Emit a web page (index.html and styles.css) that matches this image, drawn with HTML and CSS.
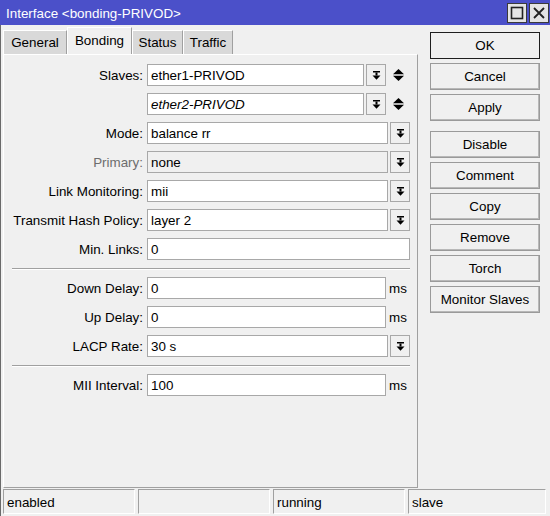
FILE: index.html
```html
<!DOCTYPE html>
<html>
<head>
<meta charset="utf-8">
<link rel="stylesheet" href="styles.css">
</head>
<body>
<div class="window">
  <div class="titlebar">
    <span class="title">Interface &lt;bonding-PRIVOD&gt;</span>
    <div class="tb-btns">
      <span class="tb-btn"><svg width="14" height="14" viewBox="0 0 14 14"><rect x="1.5" y="1.5" width="11" height="11" fill="none" stroke="#222" stroke-width="1.6"/></svg></span>
      <span class="tb-btn"><svg width="14" height="14" viewBox="0 0 14 14"><path d="M2 2 L12 12 M12 2 L2 12" stroke="#222" stroke-width="1.8" fill="none"/></svg></span>
    </div>
  </div>
  <div class="body-area">
    <div class="main">
      <div class="left">
        <div class="tabs">
          <div class="tab t-general">General</div>
          <div class="tab t-bonding active">Bonding</div>
          <div class="tab t-status">Status</div>
          <div class="tab t-traffic">Traffic</div>
        </div>
        <div class="panel">
          <div class="row">
            <div class="label">Slaves:</div>
            <div class="ctrl">
              <div class="field">ether1-PRIVOD</div>
              <div class="dd"><svg width="9" height="9" viewBox="0 0 9 9"><rect x="1" y="0" width="7" height="1.5" fill="#000"/><rect x="3.5" y="1.5" width="2" height="3" fill="#000"/><polygon points="0.5,4.5 8.5,4.5 4.5,8.8" fill="#000"/></svg></div>
              <div class="updown"><svg width="11" height="12" viewBox="0 0 11 12"><polygon points="5.5,0 11,5.3 0,5.3" fill="#000"/><polygon points="0,6.7 11,6.7 5.5,12" fill="#000"/></svg></div>
            </div>
          </div>
          <div class="row">
            <div class="label"></div>
            <div class="ctrl">
              <div class="field italic">ether2-PRIVOD</div>
              <div class="dd"><svg width="9" height="9" viewBox="0 0 9 9"><rect x="1" y="0" width="7" height="1.5" fill="#000"/><rect x="3.5" y="1.5" width="2" height="3" fill="#000"/><polygon points="0.5,4.5 8.5,4.5 4.5,8.8" fill="#000"/></svg></div>
              <div class="updown"><svg width="11" height="12" viewBox="0 0 11 12"><polygon points="5.5,0 11,5.3 0,5.3" fill="#000"/><polygon points="0,6.7 11,6.7 5.5,12" fill="#000"/></svg></div>
            </div>
          </div>
          <div class="row">
            <div class="label">Mode:</div>
            <div class="ctrl">
              <div class="field">balance rr</div>
              <div class="dd"><svg width="9" height="9" viewBox="0 0 9 9"><rect x="1" y="0" width="7" height="1.5" fill="#000"/><rect x="3.5" y="1.5" width="2" height="3" fill="#000"/><polygon points="0.5,4.5 8.5,4.5 4.5,8.8" fill="#000"/></svg></div>
            </div>
          </div>
          <div class="row">
            <div class="label disabled">Primary:</div>
            <div class="ctrl">
              <div class="field off">none</div>
              <div class="dd"><svg width="9" height="9" viewBox="0 0 9 9"><rect x="1" y="0" width="7" height="1.5" fill="#000"/><rect x="3.5" y="1.5" width="2" height="3" fill="#000"/><polygon points="0.5,4.5 8.5,4.5 4.5,8.8" fill="#000"/></svg></div>
            </div>
          </div>
          <div class="row">
            <div class="label">Link Monitoring:</div>
            <div class="ctrl">
              <div class="field">mii</div>
              <div class="dd"><svg width="9" height="9" viewBox="0 0 9 9"><rect x="1" y="0" width="7" height="1.5" fill="#000"/><rect x="3.5" y="1.5" width="2" height="3" fill="#000"/><polygon points="0.5,4.5 8.5,4.5 4.5,8.8" fill="#000"/></svg></div>
            </div>
          </div>
          <div class="row">
            <div class="label">Transmit Hash Policy:</div>
            <div class="ctrl">
              <div class="field">layer 2</div>
              <div class="dd"><svg width="9" height="9" viewBox="0 0 9 9"><rect x="1" y="0" width="7" height="1.5" fill="#000"/><rect x="3.5" y="1.5" width="2" height="3" fill="#000"/><polygon points="0.5,4.5 8.5,4.5 4.5,8.8" fill="#000"/></svg></div>
            </div>
          </div>
          <div class="row">
            <div class="label">Min. Links:</div>
            <div class="ctrl">
              <div class="field">0</div>
            </div>
          </div>
          <div class="sep"></div>
          <div class="row">
            <div class="label">Down Delay:</div>
            <div class="ctrl">
              <div class="field">0</div>
              <div class="unit">ms</div>
            </div>
          </div>
          <div class="row">
            <div class="label">Up Delay:</div>
            <div class="ctrl">
              <div class="field">0</div>
              <div class="unit">ms</div>
            </div>
          </div>
          <div class="row">
            <div class="label">LACP Rate:</div>
            <div class="ctrl">
              <div class="field">30 s</div>
              <div class="dd"><svg width="9" height="9" viewBox="0 0 9 9"><rect x="1" y="0" width="7" height="1.5" fill="#000"/><rect x="3.5" y="1.5" width="2" height="3" fill="#000"/><polygon points="0.5,4.5 8.5,4.5 4.5,8.8" fill="#000"/></svg></div>
            </div>
          </div>
          <div class="sep"></div>
          <div class="row">
            <div class="label">MII Interval:</div>
            <div class="ctrl">
              <div class="field">100</div>
              <div class="unit">ms</div>
            </div>
          </div>
        </div>
      </div>
      <div class="buttons">
        <div class="btn default">OK</div>
        <div class="btn">Cancel</div>
        <div class="btn group-end">Apply</div>
        <div class="btn">Disable</div>
        <div class="btn">Comment</div>
        <div class="btn">Copy</div>
        <div class="btn">Remove</div>
        <div class="btn">Torch</div>
        <div class="btn">Monitor Slaves</div>
      </div>
    </div>
    <div class="statusbar">
      <div class="cell">enabled</div>
      <div class="cell"></div>
      <div class="cell">running</div>
      <div class="cell last">slave</div>
    </div>
  </div>
</div>
</body>
</html>
```

FILE: styles.css
```css
html, body {
  margin: 0;
  padding: 0;
}
body {
  width: 550px;
  height: 516px;
  overflow: hidden;
  background: #f0f0f0;
  font-family: "Liberation Sans", Arial, sans-serif;
  font-size: 13.4px;
  color: #000;
}
.window {
  width: 550px;
  height: 516px;
  display: flex;
  flex-direction: column;
}
.titlebar {
  height: 25px;
  flex: none;
  background: #4b50c9;
  color: #fff;
  display: flex;
  align-items: center;
  justify-content: space-between;
  padding-left: 6px;
  box-sizing: border-box;
}
.title {
  padding-top: 1px;
}
.tb-btns {
  display: flex;
  gap: 2px;
  margin-right: 1px;
}
.tb-btn {
  width: 20px;
  height: 20px;
  box-sizing: border-box;
  border: 1px solid #3a3a3a;
  background: #e4e4e4;
  display: flex;
  align-items: center;
  justify-content: center;
}
.body-area {
  flex: 1;
  display: flex;
  flex-direction: column;
  border-left: 1px solid #6a6a6a;
}
.main {
  height: 464px;
  display: flex;
}
.left {
  margin-left: 2px;
  width: 415px;
  display: flex;
  flex-direction: column;
}
.tabs {
  height: 29px;
  display: flex;
  align-items: flex-end;
}
.tab {
  height: 24px;
  box-sizing: border-box;
  background: #d9d9d9;
  border-top: 1px solid #fff;
  border-left: 1px solid #fff;
  border-right: 1px solid #a0a0a0;
  display: flex;
  align-items: center;
  justify-content: center;
}
.tab.active {
  height: 27px;
  background: #f0f0f0;
  padding-bottom: 2px;
}
.t-general { width: 64px; }
.t-bonding { width: 65px; }
.t-status { width: 51px; }
.t-traffic { width: 50px; }
.panel {
  height: 434px;
  box-sizing: border-box;
  border: 1px solid;
  border-color: #fff #a0a0a0 #a0a0a0 #fff;
  padding: 9px 7px 0 8px;
  display: flex;
  flex-direction: column;
  gap: 7px;
}
.row {
  height: 22px;
  display: flex;
  align-items: center;
}
.label {
  width: 131px;
  margin-right: 4px;
  flex: none;
  text-align: right;
  white-space: nowrap;
}
.label.disabled {
  color: #6d6d6d;
}
.ctrl {
  flex: 1;
  display: flex;
  height: 22px;
}
.field {
  flex: 1;
  height: 22px;
  box-sizing: border-box;
  border: 1px solid #a8a8a8;
  background: #fff;
  padding-left: 3px;
  display: flex;
  align-items: center;
  white-space: nowrap;
}
.field.italic {
  font-style: italic;
}
.field.off {
  background: #f0f0f0;
}
.dd {
  width: 20px;
  height: 22px;
  margin-left: 2px;
  box-sizing: border-box;
  border: 1px solid #a8a8a8;
  background: #f0f0f0;
  display: flex;
  align-items: center;
  justify-content: center;
  flex: none;
}
.updown {
  width: 24px;
  flex: none;
  display: flex;
  align-items: center;
  justify-content: center;
}
.unit {
  width: 24px;
  flex: none;
  padding-left: 3px;
  box-sizing: border-box;
  display: flex;
  align-items: center;
}
.sep {
  height: 1px;
  background: #a0a0a0;
  border-bottom: 1px solid #fff;
  margin-top: 1px;
}
.buttons {
  margin-left: 12px;
  width: 110px;
  padding-top: 7px;
  display: flex;
  flex-direction: column;
  gap: 4px;
}
.btn {
  height: 27px;
  box-sizing: border-box;
  border: 1px solid #9a9a9a;
  box-shadow: inset -1px -1px 0 #b8b8b8;
  background: #f0f0f0;
  display: flex;
  align-items: center;
  justify-content: center;
  white-space: nowrap;
}
.btn.default {
  border-color: #1e1e1e;
  box-shadow: none;
}
.btn.group-end {
  margin-bottom: 6px;
}
.statusbar {
  height: 27px;
  display: flex;
  gap: 3px;
  padding-left: 2px;
}
.cell {
  width: 132px;
  height: 25px;
  box-sizing: border-box;
  border: 1px solid;
  border-color: #a0a0a0 #fff #fff #a0a0a0;
  padding-left: 3px;
  padding-top: 1px;
  display: flex;
  align-items: center;
}
.cell.last {
  width: 138px;
}
```
